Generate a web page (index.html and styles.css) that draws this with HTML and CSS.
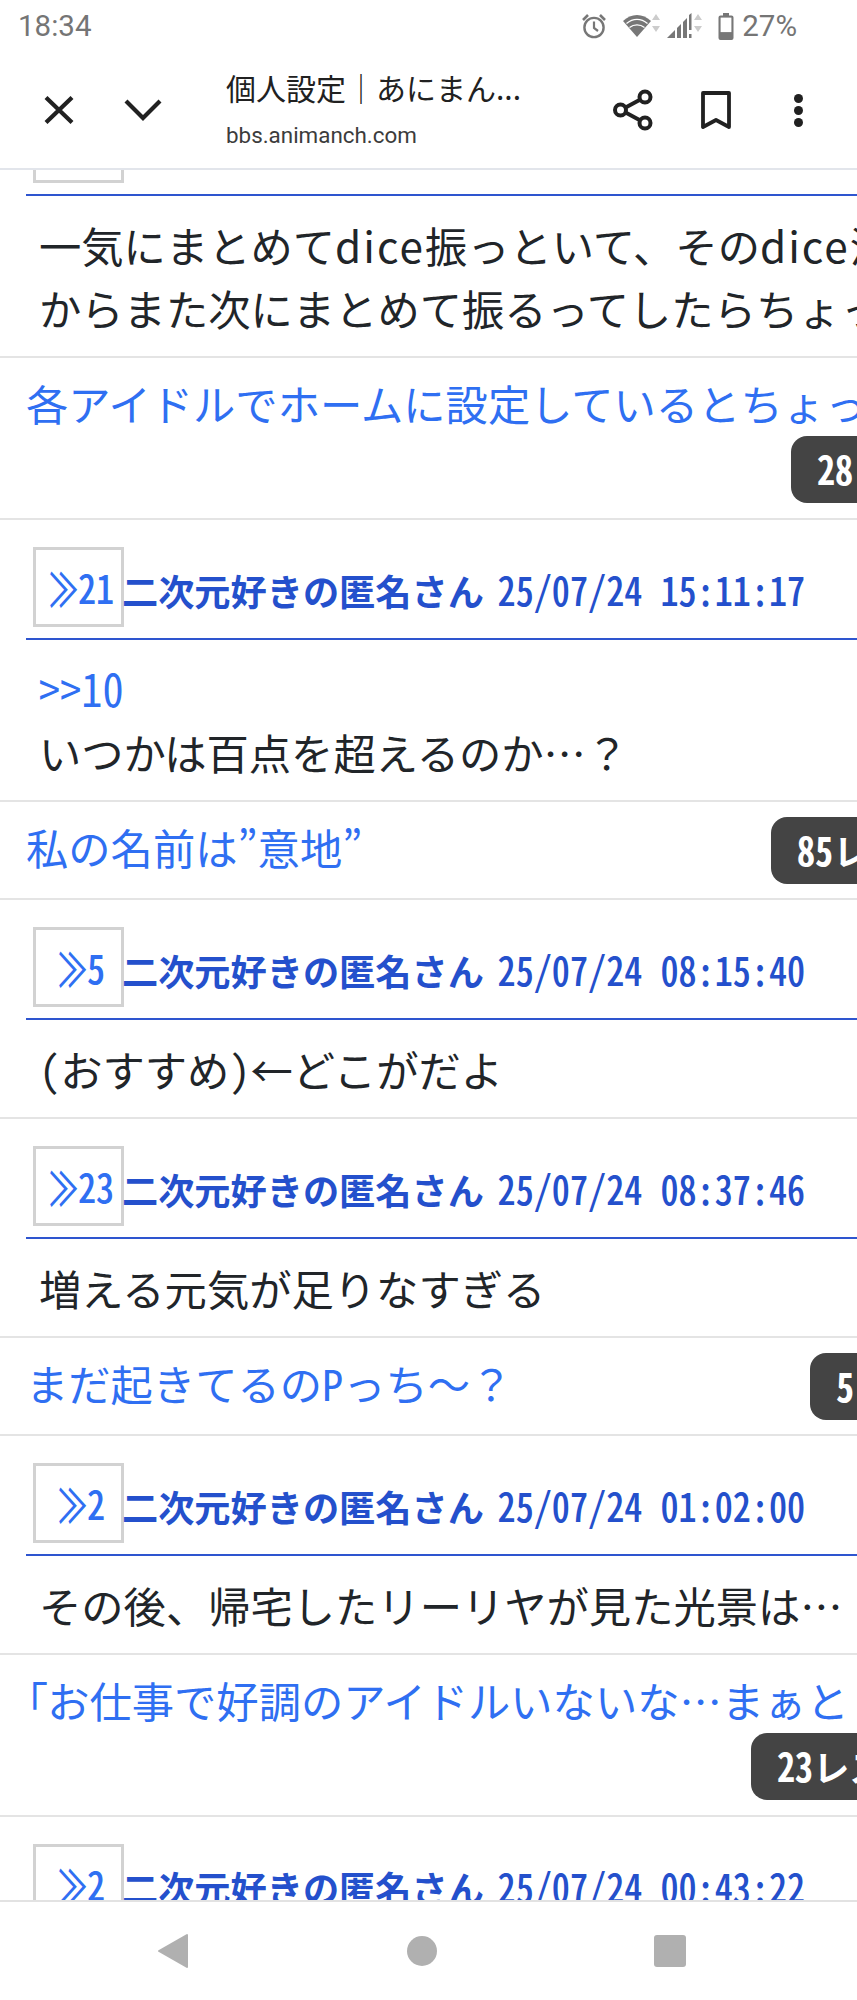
FILE: index.html
```html
<!DOCTYPE html>
<html lang="ja">
<head>
<meta charset="utf-8">
<title>個人設定｜あにまん掲示板</title>
<link rel="stylesheet" href="styles.css">
</head>
<body>
<div class="screen">
  <header class="appbar">
    <div class="status">
      <span class="time">18:34</span>
      <div class="status-right">
        <svg class="ic-alarm" viewBox="0 0 26 26" width="26" height="26"><circle cx="13" cy="14.5" r="9.6" fill="none" stroke="#777" stroke-width="2.4"/><path d="M13 8.5v6.5l4 3" fill="none" stroke="#777" stroke-width="2.2"/><path d="M2 7l5-5M24 7l-5-5" stroke="#777" stroke-width="2.6"/></svg>
        <svg class="ic-wifi" viewBox="0 0 37 26" width="37" height="26"><path d="M14 24L0 8C8 0 20 0 28 8Z" fill="#777"/><path d="M3.5 10.5C10 5 18 5 24.5 10.5M6.5 14.5C11 11 17 11 21.5 14.5" stroke="#fff" stroke-width="1.4" fill="none"/><path d="M33 1l4 6h-8zM33 19l4-6h-8z" fill="#ccc"/></svg>
        <svg class="ic-signal" viewBox="0 0 36 28" width="36" height="28"><path d="M0 26L8 18V26ZM10 16L14 12V26H10ZM16 10L20 6V26H16Z" fill="#777"/><path d="M22 3l2.5-2V18H22ZM22 22h2.5v4H22Z" fill="#777"/><path d="M31 2l4 6h-8zM31 20l4-6h-8z" fill="#ccc"/></svg>
        <svg class="ic-batt" viewBox="0 0 16 27" width="16" height="27"><path d="M5 0h6v2.5h2.5a2 2 0 0 1 2 2V25a2 2 0 0 1-2 2H2.500a2 2 0 0 1-2-2V4.500a2 2 0 0 1 2-2H5Z" fill="#777"/><rect x="2.600" y="4.600" width="10.800" height="14.500" fill="#fff"/></svg>
        <span class="pct">27%</span>
      </div>
    </div>
    <div class="toolbar">
      <svg class="ic-close" viewBox="0 0 30 28" width="30" height="28"><path d="M2 1.500L28 26.500M28 1.500L2 26.500" stroke="#212121" stroke-width="4.200" fill="none"/></svg>
      <svg class="ic-chev" viewBox="0 0 38 22" width="38" height="22"><path d="M2 2L19 19L36 2" stroke="#212121" stroke-width="4.200" fill="none"/></svg>
      <div class="titles">
        <div class="page-title">個人設定｜あにまん...</div>
        <div class="page-url">bbs.animanch.com</div>
      </div>
      <svg class="ic-share" viewBox="0 0 40 42" width="40" height="42"><path d="M32 8L8 21L32 34" stroke="#212121" stroke-width="4" fill="none"/><circle cx="32" cy="8" r="5.500" fill="#fff" stroke="#212121" stroke-width="4"/><circle cx="7.500" cy="21" r="5.500" fill="#fff" stroke="#212121" stroke-width="4"/><circle cx="32" cy="34" r="5.500" fill="#fff" stroke="#212121" stroke-width="4"/></svg>
      <svg class="ic-mark" viewBox="0 0 30 38" width="30" height="38"><path d="M2 36V2H28V36L15 29Z" stroke="#212121" stroke-width="3.800" fill="none" stroke-linejoin="round"/></svg>
      <div class="dots"><i></i><i></i><i></i></div>
    </div>
  </header>

  <main class="feed">
    <article class="post stub">
      <div class="post-head"><a class="res-no"></a></div>
      <div class="post-body">一気にまとめて<span class="latin">dice</span>振っといて、その<span class="latin">dice</span>消<br>からまた次にまとめて振るってしたらちょっ</div>
    </article>
    <section class="thread wrapbadge pos-28">
      <a class="thread-title">各アイドルでホームに設定しているとちょっ</a>
      <span class="badge"><span class="num">28</span>レス</span>
    </section>

    <article class="post">
      <div class="post-head"><a class="res-no"><span class="gg">≫</span><span class="num">21</span></a><span class="meta">二次元好きの匿名さん <span class="num">25/07/24 15:11:17</span></span></div>
      <div class="post-body"><a class="anchor"><span class="num">&gt;&gt;10</span></a><br>いつかは百点を超えるのか…？</div>
    </article>
    <section class="thread pos-85">
      <a class="thread-title">私の名前は<span class="half">”</span>意地<span class="half">”</span></a>
      <span class="badge"><span class="num">85</span>レス</span>
    </section>

    <article class="post">
      <div class="post-head"><a class="res-no"><span class="gg">≫</span><span class="num">5</span></a><span class="meta">二次元好きの匿名さん <span class="num">25/07/24 08:15:40</span></span></div>
      <div class="post-body"><span class="half">(</span>おすすめ<span class="half">)</span>←どこがだよ</div>
    </article>

    <article class="post">
      <div class="post-head"><a class="res-no"><span class="gg">≫</span><span class="num">23</span></a><span class="meta">二次元好きの匿名さん <span class="num">25/07/24 08:37:46</span></span></div>
      <div class="post-body">増える元気が足りなすぎる</div>
    </article>
    <section class="thread pos-5">
      <a class="thread-title">まだ起きてるの<span class="half">P</span>っち～？</a>
      <span class="badge"><span class="num">5</span>レス</span>
    </section>

    <article class="post">
      <div class="post-head"><a class="res-no"><span class="gg">≫</span><span class="num">2</span></a><span class="meta">二次元好きの匿名さん <span class="num">25/07/24 01:02:00</span></span></div>
      <div class="post-body">その後、帰宅したリーリヤが見た光景は…</div>
    </article>
    <section class="thread wrapbadge pos-23">
      <a class="thread-title"><span class="bracket">「</span>お仕事で好調のアイドルいないな…まぁと</a>
      <span class="badge"><span class="num">23</span>レス</span>
    </section>

    <article class="post">
      <div class="post-head"><a class="res-no"><span class="gg">≫</span><span class="num">2</span></a><span class="meta">二次元好きの匿名さん <span class="num">25/07/24 00:43:22</span></span></div>
    </article>
  </main>

  <nav class="navbar">
    <svg viewBox="0 0 32 36" width="32" height="36"><path d="M30 2V34L2 18Z" fill="#b0b0b0" stroke="#b0b0b0" stroke-width="2" stroke-linejoin="round"/></svg>
    <span class="nav-home"></span>
    <span class="nav-recent"></span>
  </nav>
</div>
</body>
</html>
```
FILE: styles.css
```css
* { box-sizing: border-box; }
html, body { margin: 0; padding: 0; background: #fff; }
body { font-family: "Noto Sans CJK JP", "Noto Sans", sans-serif; color: #212529; overflow: hidden; }
a { text-decoration: none; }

.screen { width: 857px; height: 2000px; display: flex; flex-direction: column; overflow: hidden; }

/* browser chrome */
.appbar { flex: none; height: 170px; background: #fff; border-bottom: 2px solid #e2e5eb; position: relative; z-index: 1; }
.status { height: 52px; display: flex; justify-content: space-between; align-items: center; padding: 0 60px 0 18px; font-family: Roboto, sans-serif; font-size: 29.5px; color: #757575; }
.status-right { display: flex; align-items: center; }
.ic-alarm { margin-right: 16px; }
.ic-wifi { margin-right: 7px; }
.ic-signal { margin-right: 15px; }
.ic-batt { margin-right: 8px; }
.toolbar { height: 116px; display: flex; align-items: center; padding-left: 44px; }
.ic-close { flex: none; }
.ic-chev { flex: none; margin-left: 50px; }
.titles { flex: none; width: 387px; margin-left: 64px; margin-top: -2px; }
.page-title { font-size: 30px; line-height: 44px; color: #212121; white-space: nowrap; }
.page-url { font-family: Roboto, sans-serif; font-size: 22.4px; line-height: 36px; color: #3c3c3c; margin-top: 8px; }
.ic-share { flex: none; }
.ic-mark { flex: none; margin-left: 48px; }
.dots { flex: none; margin-left: 63px; display: flex; flex-direction: column; gap: 3px; }
.dots i { display: block; width: 9px; height: 9px; border-radius: 50%; background: #212121; }

/* half-width latin and digits */
.num, .half { font-feature-settings: "hwid"; }
.num { display: inline-block; transform: scaleY(1.1); transform-origin: 50% 80%; white-space: pre; }
.latin { letter-spacing: 2px; }
.gg { display: inline-block; width: 31px; font-weight: 500; transform: scale(.82, 1.3); transform-origin: 30% 58%; }
.bracket { font-feature-settings: "palt"; }

/* content */
.feed { flex: 1; min-height: 0; overflow: hidden; }
.post-head { height: 120.5px; margin-left: 26px; padding: 27.5px 0 0 7px; display: flex; align-items: flex-start; border-bottom: 2px solid #2e55cf; white-space: nowrap; font-size: 36.2px; }
.res-no { flex: none; width: 91px; height: 80px; border: 3px solid #d2d2d2; display: flex; align-items: center; justify-content: center; padding-left: 4px; color: #2f6ff2; line-height: 1; }
.res-no .num { font-weight: 500; }
.meta { color: #2450cc; font-weight: 700; line-height: 52px; margin: 17px 0 0 -2px; }
.meta .num { font-weight: 500; margin-left: 5.5px; }
.post-body { padding: 16.75px 0 16.75px 39px; font-size: 42.3px; line-height: 63px; border-bottom: 2px solid #e4e4e4; white-space: nowrap; overflow: hidden; }
.anchor { color: #2f6ff2; }
.stub { margin-top: -94.5px; }

.thread { display: grid; padding: 15px 0 14px 26px; border-bottom: 2px solid #e4e4e4; overflow: hidden; align-items: start; }
.thread-title { font-size: 42.3px; line-height: 63px; color: #2f6ff2; white-space: nowrap; margin: -2px 0 2px; }
.badge { display: block; width: 200px; height: 67px; background: #444; color: #fff; border-radius: 16px; font-size: 36.2px; font-weight: 700; line-height: 66px; padding-left: 26px; white-space: nowrap; }
.wrapbadge { padding-bottom: 15px; }
.wrapbadge .thread-title { grid-column: 1 / -1; overflow: hidden; }
.wrapbadge .badge { grid-column: 2; }
.pos-28 { grid-template-columns: 765px 200px; }
.pos-85 { grid-template-columns: 745px 200px; }
.pos-5 { grid-template-columns: 784px 200px; }
.pos-23 { grid-template-columns: 725px 200px; }

/* nav */
.navbar { flex: none; height: 100px; background: #fff; border-top: 2px solid #e2e2e2; display: flex; align-items: center; padding: 0 0 0 157px; }
.nav-home { width: 30px; height: 30px; border-radius: 50%; background: #b0b0b0; margin-left: 218px; }
.nav-recent { width: 32px; height: 32px; border-radius: 3px; background: #b0b0b0; margin-left: 217px; }
```
